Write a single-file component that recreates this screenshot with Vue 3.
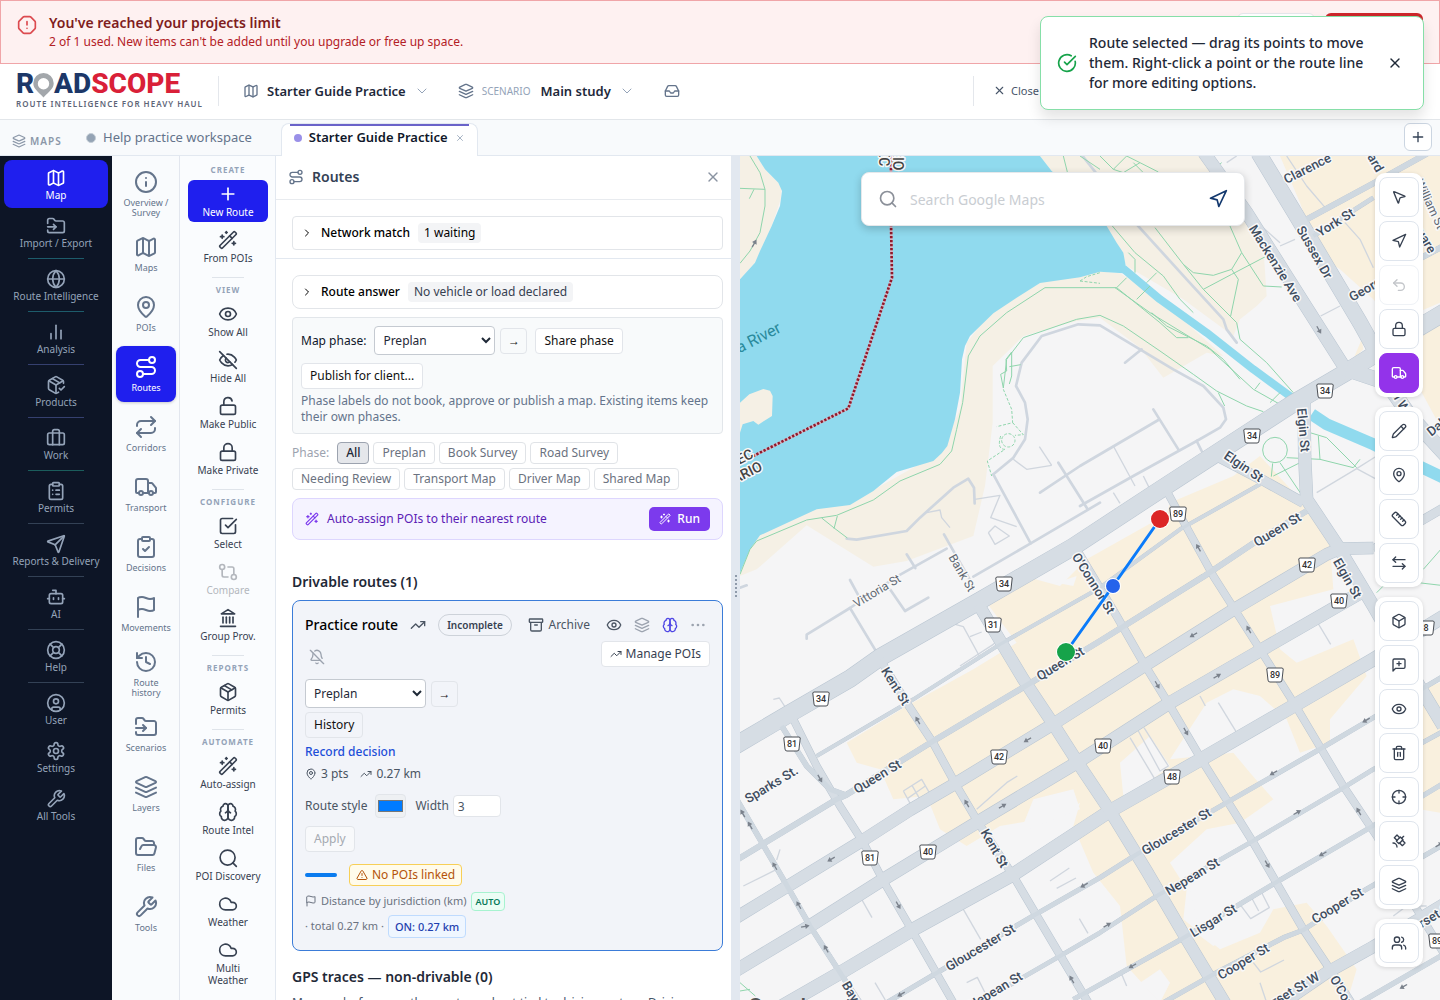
<script setup>
import { h, ref } from 'vue'

const icons = {
  map: '<path d="M14.106 5.553a2 2 0 0 0 1.788 0l3.659-1.83A1 1 0 0 1 21 4.619v12.764a1 1 0 0 1-.553.894l-4.553 2.277a2 2 0 0 1-1.788 0l-4.212-2.106a2 2 0 0 0-1.788 0l-3.659 1.83A1 1 0 0 1 3 19.381V6.618a1 1 0 0 1 .553-.894l4.553-2.277a2 2 0 0 1 1.788 0z"/><path d="M15 5.764v15"/><path d="M9 3.236v15"/>',
  folderInput: '<path d="M2 9V5a2 2 0 0 1 2-2h3.9a2 2 0 0 1 1.69.9l.81 1.2a2 2 0 0 0 1.67.9H20a2 2 0 0 1 2 2v10a2 2 0 0 1-2 2H4a2 2 0 0 1-2-2v-1"/><path d="M2 13h10"/><path d="m9 16 3-3-3-3"/>',
  globe: '<circle cx="12" cy="12" r="10"/><path d="M12 2a14.5 14.5 0 0 0 0 20 14.5 14.5 0 0 0 0-20"/><path d="M2 12h20"/>',
  chart: '<path d="M18 20V10"/><path d="M12 20V4"/><path d="M6 20v-6"/>',
  packageCheck: '<path d="m16 16 2 2 4-4"/><path d="M21 10V8a2 2 0 0 0-1-1.730l-7-4a2 2 0 0 0-2 0l-7 4A2 2 0 0 0 3 8v8a2 2 0 0 0 1 1.730l7 4a2 2 0 0 0 2 0l2-1.140"/><path d="m7.5 4.270 9 5.150"/><path d="M3.290 7 12 12l8.710-5"/><path d="M12 22V12"/>',
  luggage: '<path d="M16 20V4a2 2 0 0 0-2-2h-4a2 2 0 0 0-2 2v16"/><rect width="20" height="14" x="2" y="6" rx="2"/>',
  clipboardList: '<rect width="8" height="4" x="8" y="2" rx="1"/><path d="M16 4h2a2 2 0 0 1 2 2v14a2 2 0 0 1-2 2H6a2 2 0 0 1-2-2V6a2 2 0 0 1 2-2h2"/><path d="M12 11h4"/><path d="M12 16h4"/><path d="M8 11h.01"/><path d="M8 16h.01"/>',
  clipboardCheck: '<rect width="8" height="4" x="8" y="2" rx="1"/><path d="M16 4h2a2 2 0 0 1 2 2v14a2 2 0 0 1-2 2H6a2 2 0 0 1-2-2V6a2 2 0 0 1 2-2h2"/><path d="m9 14 2 2 4-4"/>',
  send: '<path d="M14.536 21.686a.5.5 0 0 0 .937-.024l6.500-19a.496.496 0 0 0-.635-.635l-19 6.500a.5.5 0 0 0-.024.937l7.930 3.180a2 2 0 0 1 1.112 1.110z"/><path d="m21.854 2.147-10.940 10.939"/>',
  bot: '<path d="M12 8V4H8"/><rect width="16" height="12" x="4" y="8" rx="2"/><path d="M2 14h2"/><path d="M20 14h2"/><path d="M15 13v2"/><path d="M9 13v2"/>',
  lifebuoy: '<circle cx="12" cy="12" r="10"/><path d="m4.930 4.930 4.240 4.240"/><path d="m14.830 9.170 4.240-4.240"/><path d="m14.830 14.830 4.240 4.240"/><path d="m9.170 14.830-4.240 4.240"/><circle cx="12" cy="12" r="4"/>',
  user: '<circle cx="12" cy="12" r="10"/><circle cx="12" cy="10" r="3"/><path d="M7 20.662V19a2 2 0 0 1 2-2h6a2 2 0 0 1 2 2v1.662"/>',
  settings: '<path d="M12.220 2h-.440a2 2 0 0 0-2 2v.180a2 2 0 0 1-1 1.730l-.430.250a2 2 0 0 1-2 0l-.150-.080a2 2 0 0 0-2.730.730l-.220.380a2 2 0 0 0 .730 2.730l.150.100a2 2 0 0 1 1 1.720v.510a2 2 0 0 1-1 1.740l-.150.090a2 2 0 0 0-.730 2.730l.220.380a2 2 0 0 0 2.730.730l.150-.080a2 2 0 0 1 2 0l.430.250a2 2 0 0 1 1 1.730V20a2 2 0 0 0 2 2h.440a2 2 0 0 0 2-2v-.180a2 2 0 0 1 1-1.730l.430-.250a2 2 0 0 1 2 0l.150.080a2 2 0 0 0 2.730-.730l.220-.390a2 2 0 0 0-.730-2.730l-.150-.080a2 2 0 0 1-1-1.740v-.500a2 2 0 0 1 1-1.740l.150-.090a2 2 0 0 0 .730-2.730l-.220-.380a2 2 0 0 0-2.730-.730l-.150.080a2 2 0 0 1-2 0l-.430-.250a2 2 0 0 1-1-1.730V4a2 2 0 0 0-2-2z"/><circle cx="12" cy="12" r="3"/>',
  wrench: '<path d="M14.700 6.300a1 1 0 0 0 0 1.400l1.600 1.600a1 1 0 0 0 1.400 0l3.770-3.770a6 6 0 0 1-7.940 7.940l-6.910 6.910a2.120 2.120 0 0 1-3-3l6.910-6.910a6 6 0 0 1 7.940-7.940l-3.760 3.760z"/>',
  info: '<circle cx="12" cy="12" r="10"/><path d="M12 16v-4"/><path d="M12 8h.01"/>',
  pin: '<path d="M20 10c0 4.993-5.539 10.193-7.399 11.799a1 1 0 0 1-1.202 0C9.539 20.193 4 14.993 4 10a8 8 0 0 1 16 0"/><circle cx="12" cy="10" r="3"/>',
  route: '<circle cx="6" cy="19" r="3"/><path d="M9 19h8.500a3.500 3.500 0 0 0 0-7h-11a3.500 3.500 0 0 1 0-7H15"/><circle cx="18" cy="5" r="3"/>',
  repeat: '<path d="m17 2 4 4-4 4"/><path d="M3 11v-1a4 4 0 0 1 4-4h14"/><path d="m7 22-4-4 4-4"/><path d="M21 13v1a4 4 0 0 1-4 4H3"/>',
  truck: '<path d="M14 18V6a2 2 0 0 0-2-2H4a2 2 0 0 0-2 2v11a1 1 0 0 0 1 1h2"/><path d="M15 18H9"/><path d="M19 18h2a1 1 0 0 0 1-1v-3.650a1 1 0 0 0-.220-.624l-3.480-4.350A1 1 0 0 0 17.520 8H14"/><circle cx="17" cy="18" r="2"/><circle cx="7" cy="18" r="2"/>',
  flag: '<path d="M4 15s1-1 4-1 5 2 8 2 4-1 4-1V3s-1 1-4 1-5-2-8-2-4 1-4 1z"/><path d="M4 22v-7"/>',
  history: '<path d="M3 12a9 9 0 1 0 9-9 9.750 9.750 0 0 0-6.740 2.740L3 8"/><path d="M3 3v5h5"/><path d="M12 7v5l4 2"/>',
  layers: '<path d="m12.830 2.180a2 2 0 0 0-1.660 0L2.600 6.080a1 1 0 0 0 0 1.830l8.580 3.910a2 2 0 0 0 1.660 0l8.580-3.900a1 1 0 0 0 0-1.830Z"/><path d="m22 12.650-9.170 4.160a2 2 0 0 1-1.660 0L2 12.650"/><path d="m22 17.650-9.170 4.160a2 2 0 0 1-1.660 0L2 17.650"/>',
  folderOpen: '<path d="m6 14 1.500-2.900A2 2 0 0 1 9.240 10H20a2 2 0 0 1 1.940 2.500l-1.540 6a2 2 0 0 1-1.950 1.500H4a2 2 0 0 1-2-2V5a2 2 0 0 1 2-2h3.900a2 2 0 0 1 1.690.900l.810 1.200a2 2 0 0 0 1.670.900H18a2 2 0 0 1 2 2v2"/>',
  plus: '<path d="M5 12h14"/><path d="M12 5v14"/>',
  wand: '<path d="m21.640 3.640-1.280-1.280a1.210 1.210 0 0 0-1.720 0L2.360 18.640a1.210 1.210 0 0 0 0 1.720l1.280 1.280a1.200 1.200 0 0 0 1.720 0L21.640 5.360a1.200 1.200 0 0 0 0-1.720"/><path d="m14 7 3 3"/><path d="M5 6v4"/><path d="M19 14v4"/><path d="M10 2v2"/><path d="M7 8H3"/><path d="M21 16h-4"/><path d="M11 3H9"/>',
  eye: '<path d="M2.062 12.348a1 1 0 0 1 0-.696 10.750 10.750 0 0 1 19.876 0 1 1 0 0 1 0 .696 10.750 10.750 0 0 1-19.876 0"/><circle cx="12" cy="12" r="3"/>',
  eyeOff: '<path d="M9.880 9.880a3 3 0 1 0 4.240 4.240"/><path d="M10.730 5.080A10.430 10.430 0 0 1 12 5c7 0 10 7 10 7a13.160 13.160 0 0 1-1.670 2.680"/><path d="M6.610 6.610A13.526 13.526 0 0 0 2 12s3 7 10 7a9.740 9.740 0 0 0 5.390-1.610"/><path d="m2 2 20 20"/>',
  unlock: '<rect width="18" height="11" x="3" y="11" rx="2"/><path d="M7 11V7a5 5 0 0 1 9.900-1"/>',
  lock: '<rect width="18" height="11" x="3" y="11" rx="2"/><path d="M7 11V7a5 5 0 0 1 10 0v4"/>',
  squareCheck: '<path d="M21 10.500V19a2 2 0 0 1-2 2H5a2 2 0 0 1-2-2V5a2 2 0 0 1 2-2h12.500"/><path d="m9 11 3 3L22 4"/>',
  compare: '<circle cx="5" cy="6" r="3"/><path d="M12 6h5a2 2 0 0 1 2 2v7"/><circle cx="19" cy="18" r="3"/><path d="M12 18H7a2 2 0 0 1-2-2V9"/>',
  landmark: '<path d="M3 22h18"/><path d="M6 18v-7"/><path d="M10 18v-7"/><path d="M14 18v-7"/><path d="M18 18v-7"/><path d="m12 2 8 5H4z"/>',
  package: '<path d="M11 21.730a2 2 0 0 0 2 0l7-4A2 2 0 0 0 21 16V8a2 2 0 0 0-1-1.730l-7-4a2 2 0 0 0-2 0l-7 4A2 2 0 0 0 3 8v8a2 2 0 0 0 1 1.730z"/><path d="M12 22V12"/><path d="M3.290 7 12 12l8.710-5"/><path d="m7.500 4.270 9 5.150"/>',
  box: '<path d="M21 8a2 2 0 0 0-1-1.730l-7-4a2 2 0 0 0-2 0l-7 4A2 2 0 0 0 3 8v8a2 2 0 0 0 1 1.730l7 4a2 2 0 0 0 2 0l7-4A2 2 0 0 0 21 16Z"/><path d="m3.300 7 8.700 5 8.700-5"/><path d="M12 22V12"/>',
  brain: '<path d="M12 5a3 3 0 1 0-5.997.125 4 4 0 0 0-2.526 5.770 4 4 0 0 0 .556 6.588A4 4 0 1 0 12 18Z"/><path d="M12 5a3 3 0 1 1 5.997.125 4 4 0 0 1 2.526 5.770 4 4 0 0 1-.556 6.588A4 4 0 1 1 12 18Z"/><path d="M15 13a4.500 4.500 0 0 1-3-4 4.500 4.500 0 0 1-3 4"/>',
  search: '<circle cx="11" cy="11" r="8"/><path d="m21 21-4.300-4.300"/>',
  searchWide: '<circle cx="11.500" cy="11.500" r="9"/><path d="m22 22-4.200-4.200"/>',
  cloud: '<path d="M17.500 19H9a7 7 0 1 1 6.710-9h1.790a4.500 4.500 0 1 1 0 9Z"/>',
  x: '<path d="M18 6 6 18"/><path d="m6 6 12 12"/>',
  chevronRight: '<path d="m9 18 6-6-6-6"/>',
  chevronDown: '<path d="m4 8 8 8 8-8"/>',
  inbox: '<path d="M22 12h-6l-2 3h-4l-2-3H2"/><path d="M5.450 5.110 2 12v6a2 2 0 0 0 2 2h16a2 2 0 0 0 2-2v-6l-3.450-6.890A2 2 0 0 0 16.760 4H7.240a2 2 0 0 0-1.790 1.110z"/>',
  alert: '<path d="M15.312 2a2 2 0 0 1 1.414.586l4.688 4.688A2 2 0 0 1 22 8.688v6.624a2 2 0 0 1-.586 1.414l-4.688 4.688a2 2 0 0 1-1.414.586H8.688a2 2 0 0 1-1.414-.586l-4.688-4.688A2 2 0 0 1 2 15.312V8.688a2 2 0 0 1 .586-1.414l4.688-4.688A2 2 0 0 1 8.688 2z"/><path d="M12 8v4"/><path d="M12 16h.01"/>',
  checkCircle: '<path d="M21.801 10A10 10 0 1 1 17 3.335"/><path d="m9 11 3 3L22 4"/>',
  trend: '<path d="m22 7-8.500 8.500-5-5L2 17"/><path d="M16 7h6v6"/>',
  archive: '<rect width="20" height="5" x="2" y="3" rx="1"/><path d="M4 8v11a2 2 0 0 0 2 2h12a2 2 0 0 0 2-2V8"/><path d="M10 12h4"/>',
  dots: '<circle cx="12" cy="12" r="1"/><circle cx="20" cy="12" r="1"/><circle cx="4" cy="12" r="1"/>',
  bellOff: '<path d="M10.268 21a2 2 0 0 0 3.464 0"/><path d="M17 17H4a1 1 0 0 1-.740-1.673C4.590 13.956 6 12.499 6 8a6 6 0 0 1 .258-1.742"/><path d="m2 2 20 20"/><path d="M8.668 3.010A6 6 0 0 1 18 8c0 2.687.770 4.653 1.707 6.050"/>',
  warning: '<path d="m21.730 18-8-14a2 2 0 0 0-3.480 0l-8 14A2 2 0 0 0 4 21h16a2 2 0 0 0 1.730-3"/><path d="M12 9v4"/><path d="M12 17h.01"/>',
  pointer: '<path d="M4.037 4.688a.495.495 0 0 1 .651-.651l16 6.500a.5.5 0 0 1-.063.947l-6.124 1.580a2 2 0 0 0-1.438 1.435l-1.579 6.126a.5.5 0 0 1-.947.063z"/>',
  navigation: '<path d="m3 11 19-9-9 19-2-8z"/>',
  undo: '<path d="M9 14 4 9l5-5"/><path d="M4 9h10.500a5.500 5.500 0 0 1 0 11H11"/>',
  pencil: '<path d="M21.174 6.812a1 1 0 0 0-3.986-3.987L3.842 16.174a2 2 0 0 0-.5.830l-1.321 4.352a.5.5 0 0 0 .623.622l4.353-1.320a2 2 0 0 0 .830-.497z"/><path d="m15 5 4 4"/>',
  ruler: '<path d="M21.300 15.300a2.400 2.400 0 0 1 0 3.400l-2.600 2.600a2.400 2.400 0 0 1-3.400 0L2.700 8.700a2.410 2.410 0 0 1 0-3.400l2.600-2.600a2.410 2.410 0 0 1 3.400 0Z"/><path d="m14.500 12.500 2-2"/><path d="m11.500 9.500 2-2"/><path d="m8.500 6.500 2-2"/><path d="m17.500 15.500 2-2"/>',
  swap: '<path d="M21 7H3"/><path d="m7 3-4 4 4 4"/><path d="M3 17h18"/><path d="m17 21 4-4-4-4"/>',
  comment: '<path d="M21 15a2 2 0 0 1-2 2H7l-4 4V5a2 2 0 0 1 2-2h14a2 2 0 0 1 2 2z"/><path d="M12 7v6"/><path d="M9 10h6"/>',
  trash: '<path d="M3 6h18"/><path d="M19 6v14a2 2 0 0 1-2 2H7a2 2 0 0 1-2-2V6"/><path d="M8 6V4a2 2 0 0 1 2-2h4a2 2 0 0 1 2 2v2"/><path d="M10 11v6"/><path d="M14 11v6"/>',
  crosshair: '<circle cx="12" cy="12" r="10"/><path d="M22 12h-4"/><path d="M6 12H2"/><path d="M12 6V2"/><path d="M12 22v-4"/>',
  satellite: '<path d="M13 7 9 3 5 7l4 4"/><path d="m17 11 4 4-4 4-4-4"/><path d="m8 12 4 4 6-6-4-4Z"/><path d="m16 8 3-3"/><path d="M9 21a6 6 0 0 0-6-6"/>',
  users: '<path d="M16 21v-2a4 4 0 0 0-4-4H6a4 4 0 0 0-4 4v2"/><circle cx="9" cy="7" r="4"/><path d="M22 21v-2a4 4 0 0 0-3-3.870"/><path d="M16 3.130a4 4 0 0 1 0 7.750"/>'
}

const Icon = (props) =>
  h('svg', {
    width: props.size,
    height: props.size,
    viewBox: '0 0 24 24',
    fill: 'none',
    stroke: 'currentColor',
    'stroke-width': props.weight || 2,
    'stroke-linecap': 'round',
    'stroke-linejoin': 'round',
    'aria-hidden': 'true',
    class: 'icon',
    innerHTML: icons[props.name]
  })
Icon.props = ['name', 'size', 'weight']

const mainNav = [
  { label: 'Map', icon: 'map', active: true },
  { label: 'Import / Export', icon: 'folderInput', tone: 'teal' },
  { label: 'Route Intelligence', icon: 'globe', tone: 'teal' },
  { label: 'Analysis', icon: 'chart', tone: 'indigo' },
  { label: 'Products', icon: 'packageCheck', tone: 'indigo' },
  { label: 'Work', icon: 'luggage', tone: 'green' },
  { label: 'Permits', icon: 'clipboardList', tone: 'slate' },
  { label: 'Reports & Delivery', icon: 'send', tone: 'slate' },
  { label: 'AI', icon: 'bot', tone: 'slate' },
  { label: 'Help', icon: 'lifebuoy', tone: 'slate' },
  { label: 'User', icon: 'user' },
  { label: 'Settings', icon: 'settings' },
  { label: 'All Tools', icon: 'wrench' }
]

const sectionNav = [
  { label: 'Overview / Survey', icon: 'info' },
  { label: 'Maps', icon: 'map' },
  { label: 'POIs', icon: 'pin' },
  { label: 'Routes', icon: 'route', active: true },
  { label: 'Corridors', icon: 'repeat' },
  { label: 'Transport', icon: 'truck' },
  { label: 'Decisions', icon: 'clipboardCheck' },
  { label: 'Movements', icon: 'flag' },
  { label: 'Route history', icon: 'history' },
  { label: 'Scenarios', icon: 'folderInput' },
  { label: 'Layers', icon: 'layers' },
  { label: 'Files', icon: 'folderOpen' },
  { label: 'Tools', icon: 'wrench' }
]

const actionGroups = [
  { title: 'CREATE', items: [{ label: 'New Route', icon: 'plus', primary: true }, { label: 'From POIs', icon: 'wand' }] },
  { title: 'VIEW', items: [{ label: 'Show All', icon: 'eye' }, { label: 'Hide All', icon: 'eyeOff' }, { label: 'Make Public', icon: 'unlock' }, { label: 'Make Private', icon: 'lock' }] },
  { title: 'CONFIGURE', items: [{ label: 'Select', icon: 'squareCheck' }, { label: 'Compare', icon: 'compare', disabled: true }, { label: 'Group Prov.', icon: 'landmark' }] },
  { title: 'REPORTS', items: [{ label: 'Permits', icon: 'package' }] },
  { title: 'AUTOMATE', items: [{ label: 'Auto-assign', icon: 'wand' }, { label: 'Route Intel', icon: 'brain' }, { label: 'POI Discovery', icon: 'searchWide' }, { label: 'Weather', icon: 'cloud' }, { label: 'Multi\nWeather', icon: 'cloud' }] }
]

const phases = ['All', 'Preplan', 'Book Survey', 'Road Survey', 'Needing Review', 'Transport Map', 'Driver Map', 'Shared Map']
const phase = ref('All')
const mapPhase = ref('Preplan')
const routePhase = ref('Preplan')
const routeColor = ref('#007bff')
const routeWidth = ref('3')
const query = ref('')

const toolGroups = [
  [['pointer', 'Select'], ['navigation', 'Navigate'], ['undo', 'Undo', 'off'], ['lock', 'Lock'], ['truck', 'Truck view', 'on']],
  [['pencil', 'Draw'], ['pin', 'Add point'], ['ruler', 'Measure'], ['swap', 'Swap']],
  [['box', '3D'], ['comment', 'Comment'], ['eye', 'Visibility'], ['trash', 'Delete'], ['crosshair', 'Centre'], ['satellite', 'Satellite'], ['layers', 'Layers']],
  [['users', 'People']]
]

// Map geometry is kept in a grid three times finer than the drawn map.
const roads = [
  { w: 54, p: '-20,1772 150,1672 330,1568 420,1504 720,1334 1000,1172 1270,995 1660,742 1820,648 1960,560 2120,465' },
  { w: 18, p: '-20,2118 290,1930 320,1916 580,1755 860,1588 1080,1455 1390,1262 1540,1162 1700,1065' },
  { w: 12, p: '230,1800 520,1630 780,1465 1080,1295 1320,1120 1560,985' },
  { w: 38, p: '-20,2290 370,2052 510,1962 640,1886 940,1704 1220,1525 1490,1355 1760,1195 1800,1178 1900,1176' },
  { w: 40, p: '-20,2448 210,2310 430,2170 710,2000 1010,1820 1290,1640 1560,1484 1880,1300' },
  { w: 42, p: '40,2600 310,2445 520,2320 820,2155 1110,1965 1390,1806 1660,1650 1900,1510 2120,1376' },
  { w: 15, p: '440,2540 600,2445 870,2285 1080,2165 1190,2095 1460,1940 1730,1785 1900,1685 2120,1555' },
  { w: 14, p: '700,2550 960,2400 1080,2330 1250,2220 1530,2060 1810,1895 1900,1840 2120,1720' },
  { w: 15, p: '1000,2530 1320,2352 1610,2178 1890,2015 2120,1876' },
  { w: 15, p: '1270,2540 1420,2455 1630,2345 1690,2322 1870,2205 2120,2060' },
  { w: 38, p: '1600,2560 1760,2450 1900,2372 2120,2240' },
  { w: 16, p: '1860,2540 2120,2390' },
  { w: 17, p: '-10,1930 130,2170 210,2310 310,2465 360,2540' },
  { w: 24, p: '160,1690 230,1830 300,1950 370,2060 430,2175 520,2330 640,2540' },
  { w: 17, p: '125,1710 200,1830 270,1900 320,1918' },
  { w: 25, p: '420,1510 500,1640 580,1762 650,1890 715,2000 820,2160 950,2380 1045,2540' },
  { w: 38, p: '715,1345 850,1570 940,1705 1020,1830 1110,1965 1220,2145 1340,2350 1460,2550' },
  { w: 25, p: '1010,1180 1130,1380 1210,1520 1290,1650 1390,1820 1540,2060 1690,2320 1770,2440 1840,2550' },
  { w: 24, p: '1280,1005 1420,1260 1560,1480 1670,1655 1810,1890 1910,2040 2000,2210 2110,2390' },
  { w: 40, p: '1692,740 1694,900 1700,1030 1790,1165 1900,1350 2020,1560 2110,1710' },
  { w: 32, p: '1440,905 1560,968 1690,1040' },
  { w: 40, p: '1392,-10 1520,170 1640,360 1830,660' },
  { w: 48, p: '1555,-10 1670,180 1860,500 1910,590' },
  { w: 18, p: '1700,190 1900,82 2120,-40' },
  { w: 14, p: '1720,240 1900,125' },
  { w: 18, p: '1830,430 1940,360 2120,265' },
  { w: 46, p: '1820,640 1940,680 2010,780 2120,900' },
  { w: 28, p: '1900,1180 2000,1120 2120,1050' }
]

const lanes = [
  '320,1148 350,1151 500,1125 540,1085 640,995 685,968 702,995 704,1042',
  '1020,-10 1190,205 1340,370 1450,490 1460,520 1490,560',
  '760,955 820,905 855,850 863,790 855,740 828,690 845,620 905,540 1015,505 1080,508 1200,580 1300,640 1390,690 1450,755 1458,790 1440,815 1370,855 1180,960 1020,1050',
  '900,1010 1020,930 1255,792', '1240,760 1315,880', '1370,855 1385,885', '760,955 872,1162', '955,920 1042,1058',
  '700,1262 872,1162 1080,1040', '200,1448 200,1436 330,1356 470,1262 620,1178', '330,1356 412,1492', '450,1300 495,1365 565,1325',
  '500,1195 526,1236', '612,1135 700,1290', '1205,580 1155,620', '330,1272 355,1318', '0,1295 20,1288'
]

const alleys = [
  '820,910 860,940 935,928', '898,872 935,928', '560,1070 600,1062 605,1085 630,1115', '704,1030 780,1018 752,1085 830,1112',
  '745,1130 765,1110 808,1140 765,1165 745,1130', '660,1530 760,1465 780,1440', '635,1402 670,1412 718,1500', '690,1442 725,1428',
  '490,1905 545,1870 568,1910 512,1945 490,1905', '516,1888 540,1930', '502,1928 556,1890', '710,1960 800,1880 832,1860',
  '1170,1745 1245,1870', '1195,1725 1260,1845 1285,1830 1212,1715', '1435,1640 1490,1730', '1380,1620 1396,1650', '1730,1395 1772,1465',
  '365,2230 396,2285', '670,2260 722,2350', '930,2175 988,2136', '950,2197 1008,2166', '1018,2288 1044,2332', '680,2480 712,2464 740,2520',
  '405,2480 436,2532', '100,1630 118,1626 140,1660', '10,2190 110,2140', '110,2112 120,2080', '1500,2245 1532,2288 1588,2255 1564,2208', '1532,2220 1556,2265',
  '1145,2455 1160,2490', '1540,2420 1562,2448 1632,2412', '1560,2480 1580,2540', '1120,870 1185,990', '1730,1010 1850,938 1910,900', '1850,938 1910,970',
  '1120,1010 1140,1042', '1210,960 1230,1000', '1620,270 1665,250', '1742,480 1800,450', '1815,200 1860,250 1900,335', '1460,20 1490,0', '1530,180 1620,260',
  '1640,0 1700,90 1760,160', '1960,2280 2000,2250 2060,2250', '1910,2320 1950,2290'
]

const trails = [
  '30,0 60,50 75,100 75,150 60,230 30,285 0,322', '0,97 75,100', '42,100 28,128',
  '0,1255 30,1180 50,1155 200,1092 290,1078 400,1032 480,975 600,925 635,885 650,820 668,740 685,600 720,540 800,470 915,395 1130,395 1260,500 1310,545 1345,545',
  '245,1086 285,1118 322,1146', '292,1080 282,1118', '790,696 800,610 850,545 1010,490 1080,478 1150,510 1260,585 1360,655 1430,705 1520,750 1570,767',
  '790,696 782,655 800,645 798,610 815,588 815,660 808,684', '808,632 842,626', '1100,190 1185,290 1270,360 1320,430 1360,470',
  '1125,395 1230,470 1410,580 1540,700 1620,745', '1235,470 1280,510 1400,570 1450,610 1500,670', '1245,215 1330,325 1360,350 1420,358 1475,340 1505,290 1470,210',
  '1505,290 1570,390 1625,393', '1390,400 1475,355 1580,300', '1330,325 1390,400 1490,500 1500,550 1580,620 1660,710', '1475,340 1495,370 1472,480',
  '1080,0 1120,40 1160,0 1200,20', '970,0 982,48', '1120,40 1150,50 1200,20 1255,48', '1180,20 1210,50', '1400,60 1445,20', '1020,0 1080,40', '1165,290 1185,310 1185,350',
  '1190,430 1230,390', '1220,380 1250,350', '1130,395 1160,365', '1640,905 1740,910 1840,935 1860,910', '1598,922 1594,962', '1600,960 1680,920', '1620,920 1682,1012',
  '1735,840 1740,910', '1710,830 1760,845 1850,935', '1435,710 1454,750', '1545,700 1560,680', '1590,740 1620,710', '0,2480 46,2520', '0,2505 30,2500', '1910,1310 1950,1270 2120,1290', '2050,1240 2120,1160'
]

const blocks = [
  '740,1340 870,1265 960,1290 1040,1210 1280,1075 1290,1040 1480,960 1560,900 1690,1040 1770,1170 1780,1300 1590,1350 1620,1480 1670,1520 1840,1450 1880,1560 1770,1690 1770,1760 1680,1790 1640,1690 1560,1620 1480,1600 1400,1640 1290,1810 1480,1790 1530,1850 1600,1930 1500,2000 1400,2020 1290,2120 1340,2200 1330,2290 1440,2380 1560,2330 1600,2260 1700,2240 1760,2310 1850,2440 1820,2540 1260,2540 1160,2430 1140,2250 1060,2150 1000,2010 1020,1940 960,1980 780,2010 680,2070 600,2020 560,1920 460,1930 420,1840 350,1820 320,1760 500,1650 700,1540 830,1460',
  '1620,0 2100,0 2100,440 1960,500 1900,430 1800,340 1740,300 1680,140', '2050,520 2100,490 2100,810 2040,700', '1840,610 1870,580 1865,550', '2040,1600 2100,1580 2100,1970 2040,1960'
]
const gaps = [
  '1140,1820 1230,1740 1290,1830 1210,1890 1150,1920', '880,1930 1000,1900 1020,1960 840,2030', '950,1280 1010,1260 1000,1290', '1340,2160 1440,2100 1480,2220 1480,2340 1420,2370 1380,2340', '1200,2480 1260,2440 1290,2480 1260,2540'
]

const labels = [
  [567, 12, -27, 'Clarence'], [595, 66, -32, 'York St'], [575, 96, 60, 'Sussex Dr'], [536, 107, 58, 'Mackenzie Ave'], [628, 131, -30, 'George'],
  [564, 274, 85, 'Elgin St'], [504, 310, 34, 'Elgin St'], [537, 373, -31, 'Queen St'], [608, 422, 60, 'Elgin St'], [354, 427, 58, 'O\'Connor St'],
  [320, 507, -31, 'Queen St'], [156, 530, 58, 'Kent St'], [137, 620, -31, 'Queen St'], [31, 628, -31, 'Sparks St.'], [255, 692, 60, 'Kent St'],
  [436, 675, -31, 'Gloucester St'], [452, 720, -31, 'Nepean St'], [473, 764, -31, 'Lisgar St'], [597, 749, -31, 'Cooper St'], [503, 805, -31, 'Cooper St'],
  [240, 791, -31, 'Gloucester St'], [255, 834, -31, 'Nepean St'], [115, 842, 60, 'Bay St'], [541, 841, -31, 'Somerset St W'], [611, 850, 60, 'O\'Connor St'],
  [630, -4, 60, 'Edward'], [683, 78, 60, 'Square'], [698, 269, -38, 'Daly'], [694, 759, -31, 'merset St W'], [657, 238, 60, 'Wall W']
]
const quietLabels = [[137, 435, -31, 'Vittoria St'], [222, 417, 60, 'Bank St'], [690, 48, 65, 'William St']]

const shields = [
  [585, 235, '34'], [512, 280, '34'], [438, 358, '89'], [567, 409, '42'], [599, 445, '40'], [264, 428, '34'], [253, 469, '31'], [535, 519, '89'],
  [81, 543, '34'], [52, 588, '81'], [259, 601, '42'], [363, 590, '40'], [432, 621, '48'], [188, 696, '40'], [130, 702, '81'], [686, 472, '8'], [697, 785, '89']
]

const arrows = [
  [533, 1693, -120], [862, 1752, 150], [240, 1868, 60], [680, 1942, -120], [788, 1950, -30], [8, 1972, -120], [30, 2008, -120], [104, 2130, -120],
  [176, 2247, -120], [273, 2110, 150], [475, 2248, 60], [196, 2311, -10], [258, 2378, -120], [1032, 2188, 150], [995, 2470, -120], [483, 2515, 150],
  [1360, 1437, 150], [1526, 1420, -120], [1432, 1560, -30], [1252, 1587, 60], [1338, 1727, 60], [1878, 1693, 150], [1600, 1851, 150], [1672, 1969, -30],
  [1856, 1966, -120], [1582, 2125, 60], [1748, 2094, 150], [1102, 2307, -30], [1177, 2430, 150], [1990, 2492, 150], [1737, 522, 60],
  [1375, 1175, -120], [43, 262, -60], [2098, 2066, -30]
]
</script>

<template>
  <div class="app">
    <section class="banner">
      <Icon name="alert" :size="20" class="banner-icon" />
      <div class="banner-text">
        <strong>You've reached your projects limit</strong>
        <span>2 of 1 used. New items can't be added until you upgrade or free up space.</span>
      </div>
      <div class="banner-actions">
        <button class="banner-manage" aria-label="Manage"></button>
        <button class="banner-upgrade" aria-label="Upgrade"></button>
      </div>
    </section>

    <header class="topbar">
      <a href="#" class="brand">
        <span class="wordmark">
          <span class="navy">R</span>
          <svg class="brand-pin" width="21" height="25" viewBox="0 0 21 25" aria-hidden="true">
            <path fill="#a3a7ab" fill-rule="evenodd" d="M10.500 0a10.200 10.200 0 0 1 10.200 10.200c0 5.500-4.500 8-10.200 14.300C4.800 18.200.3 15.700.3 10.200A10.200 10.200 0 0 1 10.500 0Zm0 5a5.700 5.700 0 1 0 0 11.400 5.700 5.700 0 0 0 0-11.400Z" />
          </svg>
          <span class="navy">AD</span><span class="red">SCOPE</span>
        </span>
        <span class="tagline">ROUTE INTELLIGENCE FOR HEAVY HAUL</span>
      </a>
      <i class="rule"></i>
      <button class="picker project"><Icon name="map" :size="16" /><b>Starter Guide Practice</b><Icon name="chevronDown" :size="12" class="muted" /></button>
      <button class="picker scenario"><Icon name="layers" :size="16" /><small>SCENARIO</small><b>Main study</b><Icon name="chevronDown" :size="12" class="muted" /></button>
      <button class="picker" aria-label="Inbox"><Icon name="inbox" :size="16" /></button>
      <i class="rule last"></i>
      <button class="close-project"><Icon name="x" :size="13" />Close</button>
    </header>

    <nav class="tabs" aria-label="Open maps">
      <span class="tabs-title"><Icon name="layers" :size="14" />MAPS</span>
      <a href="#" class="tab"><i class="dot"></i>Help practice workspace</a>
      <a href="#" class="tab current"><i class="dot"></i>Starter Guide Practice<Icon name="x" :size="10" class="tab-close" /></a>
      <button class="add-tab" aria-label="New tab"><Icon name="plus" :size="16" /></button>
    </nav>

    <main class="workspace">
      <nav class="main-nav" aria-label="Main">
        <template v-for="item in mainNav" :key="item.label">
          <a href="#" :class="{ active: item.active }"><Icon :name="item.icon" :size="20" /><span>{{ item.label }}</span></a>
          <hr v-if="item.tone" :class="item.tone" />
        </template>
      </nav>

      <nav class="section-nav" aria-label="Section">
        <a v-for="item in sectionNav" :key="item.label" href="#" :class="{ active: item.active }">
          <Icon :name="item.icon" :size="24" /><span>{{ item.label }}</span>
        </a>
      </nav>

      <aside class="actions">
        <section v-for="group in actionGroups" :key="group.title">
          <h3>{{ group.title }}</h3>
          <button v-for="item in group.items" :key="item.label" :class="{ primary: item.primary }" :disabled="item.disabled">
            <Icon :name="item.icon" :size="20" /><span>{{ item.label }}</span>
          </button>
        </section>
      </aside>

      <section class="panel">
        <header class="panel-head">
          <Icon name="route" :size="16" />
          <h2>Routes</h2>
          <button class="plain" aria-label="Close panel"><Icon name="x" :size="16" /></button>
        </header>
        <div class="panel-top">
          <button class="disclosure"><Icon name="chevronRight" :size="12" /><b>Network match</b><span>1 waiting</span></button>
        </div>
        <div class="panel-body">
          <button class="disclosure round"><Icon name="chevronRight" :size="12" /><b>Route answer</b><span class="soft">No vehicle or load declared</span></button>

          <div class="phase-box">
            <div class="phase-row">
              <label for="map-phase">Map phase:</label>
              <span class="pair">
                <select id="map-phase" v-model="mapPhase"><option>Preplan</option><option>Road Survey</option></select>
                <button class="btn arrow faint" aria-label="Next phase">→</button>
              </span>
              <button class="btn">Share phase</button>
              <button class="btn">Publish for client...</button>
            </div>
            <p>Phase labels do not book, approve or publish a map. Existing items keep their own phases.</p>
          </div>

          <div class="chips">
            <span>Phase:</span>
            <button v-for="name in phases" :key="name" :class="{ on: phase === name }" @click="phase = name">{{ name }}</button>
          </div>

          <div class="assign">
            <Icon name="wand" :size="14" /><span>Auto-assign POIs to their nearest route</span>
            <button><Icon name="wand" :size="12" />Run</button>
          </div>

          <h3 class="list-title">Drivable routes (1)</h3>
          <article class="route">
            <div class="route-head">
              <strong>Practice route</strong>
              <Icon name="trend" :size="16" />
              <span class="badge">Incomplete</span>
              <button class="plain archive"><Icon name="archive" :size="16" />Archive</button>
              <button class="plain tool" aria-label="Show"><Icon name="eye" :size="16" /></button>
              <button class="plain tool pale" aria-label="Layers"><Icon name="layers" :size="16" /></button>
              <button class="plain tool violet" aria-label="Route intel"><Icon name="brain" :size="16" /></button>
              <button class="plain tool pale" aria-label="More"><Icon name="dots" :size="16" /></button>
            </div>
            <div class="route-sub">
              <button class="plain bell" aria-label="Alerts off"><Icon name="bellOff" :size="16" /></button>
              <button class="btn manage"><Icon name="trend" :size="12" />Manage POIs</button>
            </div>
            <div class="pair">
              <select v-model="routePhase" aria-label="Route phase"><option>Preplan</option><option>Road Survey</option></select>
              <button class="btn arrow faint" aria-label="Next route phase">→</button>
            </div>
            <button class="btn faint history">History</button>
            <a href="#" class="decision">Record decision</a>
            <div class="stats">
              <span><Icon name="pin" :size="12" />3 pts</span>
              <span><Icon name="trend" :size="12" />0.27 km</span>
            </div>
            <div class="style-row">
              <label for="route-color">Route style</label>
              <input id="route-color" v-model="routeColor" type="color" />
              <label for="route-width">Width</label>
              <input id="route-width" v-model="routeWidth" type="text" inputmode="numeric" />
            </div>
            <button class="btn apply" disabled>Apply</button>
            <div class="linked"><i></i><span><Icon name="warning" :size="12" />No POIs linked</span></div>
            <div class="distance"><Icon name="flag" :size="12" />Distance by jurisdiction (km)<em>AUTO</em></div>
            <div class="total">· total 0.27 km ·<em>ON: 0.27 km</em></div>
          </article>

          <h3 class="list-title traces">GPS traces — non-drivable (0)</h3>
          <p class="traces-note">Map marks from another route are kept tied to driving system. Driving</p>
        </div>
      </section>

      <div class="splitter"><i></i></div>

      <section class="map">
        <svg class="canvas" viewBox="0 0 700 844" preserveAspectRatio="xMinYMin slice" role="img" aria-label="Street map">
          <rect width="700" height="844" fill="#f5f5f6" />
          <g transform="scale(.333333)" fill="none" stroke-linejoin="round">
            <g fill="#f5f0e5">
              <path d="M0 0H50L75 40 125 90 122 130 95 210 45 320 0 370Z" />
              <path d="M0 1260 50 1240 200 1108 300 1170 400 1232 500 1215 700 1140 735 990 758 800 758 630 820 570 850 540 1010 495 1080 485 1200 575 1270 665 1400 590 1450 600 1250 420 1140 352 1000 340 880 380 750 470 680 560 660 760 600 890 350 1030 200 1060 50 1130 0 1230Z" />
              <path d="M900 0H1380L1570 270 1580 420 1550 450 1500 490 1480 540 1330 430 1160 330 1100 210 935 45Z" />
            </g>
            <path fill="#90daee" d="M50 0H900L935 45 1040 130 1100 210 1130 260 1150 290 1160 345 1150 352 1080 347 1020 364 900 381 830 425 760 472 690 540 675 570 666 610 660 710 645 790 622 870 605 892 580 915 470 948 400 1005 330 1047 230 1060 60 1138 30 1180 0 1250V370L45 320 60 285 95 210 120 150 126 105 115 80 75 40Z" />
            <path fill="#f5f0e5" d="M0 740 28 715 70 699 90 704 98 720 96 780 55 806 40 795 8 805 0 830Z" />
            <g fill="#f9f0de"><polygon v-for="p in blocks" :key="p" :points="p" /></g>
            <g fill="#f5f5f6"><polygon v-for="p in gaps" :key="p" :points="p" /></g>
            <g stroke="#d0d6de" stroke-width="4"><polyline v-for="p in alleys" :key="p" :points="p" /></g>
            <g stroke="#cfd6df" stroke-width="8" stroke-linecap="round"><polyline v-for="p in lanes" :key="p" :points="p" /></g>
            <path stroke="#90daee" stroke-width="24" d="M1150 338 1260 430 1400 530 1540 640 1670 735" />
            <path stroke="#90daee" stroke-width="36" d="M1715 775 1760 805 1900 865 2120 970" />
            <g stroke="#8fd5ac" stroke-width="3"><polyline v-for="p in trails" :key="p" :points="p" /><ellipse cx="1605" cy="882" rx="37" ry="38" /></g>
            <path stroke="#8fd5ac" stroke-width="3" stroke-dasharray="9 5" d="M790 700 815 760 818 800 770 812 M818 800 850 836 825 838 M782 840 Q770 880 795 880 L742 915 755 960 M785 853a20 20 0 1 0 40 0 20 20 0 1 0-40 0 M1020 375 1040 362 1080 350 M1020 375 1080 382" />
            <g stroke="#b9c5d1"><polyline v-for="r in roads" :key="r.p" :points="r.p" :stroke-width="r.w" /></g>
            <g stroke="#d6dde4"><polyline v-for="r in roads" :key="r.p" :points="r.p" :stroke-width="r.w - 3" /></g>
            <g stroke="#cfd8e0"><polyline v-for="r in roads.filter((r) => r.w < 20)" :key="r.p" :points="r.p" :stroke-width="r.w - 2" /></g>
            <g v-for="(a, i) in arrows" :key="i" :transform="`translate(${a[0]} ${a[1]}) rotate(${a[2]})`" fill="#7b828c">
              <path d="M-13 -2H0V-8L13 0 0 8V2H-13Z" />
            </g>
            <path stroke="#d8b4c2" stroke-width="8" d="M453 0V200L456 365 325 757 20 910" />
            <path stroke="#8f1a2b" stroke-width="8" stroke-dasharray="7 5" d="M453 0V200L456 365 325 757 20 910" />
          </g>

          <g class="street">
            <text v-for="(t, i) in labels" :key="i" :transform="`translate(${t[0]} ${t[1]}) rotate(${t[2]})`" y="5">{{ t[3] }}</text>
          </g>
          <g class="street quiet">
            <text v-for="(t, i) in quietLabels" :key="i" :transform="`translate(${t[0]} ${t[1]}) rotate(${t[2]})`" y="4">{{ t[3] }}</text>
          </g>
          <g class="street border-label">
            <text transform="translate(139 -16) rotate(90)">QUEBEC</text>
            <text transform="translate(153 -15) rotate(90)">ONTARIO</text>
            <text transform="translate(-9 313) rotate(-27)">QUEBEC</text>
            <text transform="translate(-3 327) rotate(-27)">ONTARIO</text>
          </g>
          <text class="river" transform="translate(2 196) rotate(-27)">Ottawa River</text>
          <text class="watermark" x="8" y="858">Google</text>

          <g v-for="(s, i) in shields" :key="i" :transform="`translate(${s[0]} ${s[1]})`" class="shield">
            <path d="M-7 -7H7Q9 -7 8 -4L7 5Q7 7 5 7H-5Q-7 7 -7 5L-8 -4Q-9 -7 -7 -7Z" />
            <text y="3">{{ s[2] }}</text>
          </g>

          <path d="M420 363 373 430 326 496" fill="none" stroke="#0a7bfa" stroke-width="3" />
          <circle cx="420" cy="363" r="10" fill="#fff" /><circle cx="420" cy="363" r="9" fill="#dc2626" />
          <circle cx="373" cy="430" r="8" fill="#fff" /><circle cx="373" cy="430" r="7" fill="#2563eb" />
          <circle cx="326" cy="496" r="10" fill="#fff" /><circle cx="326" cy="496" r="9" fill="#16a34a" />
        </svg>

        <form class="search" @submit.prevent>
          <Icon name="search" :size="20" />
          <input v-model="query" type="search" aria-label="Search Google Maps" placeholder="Search Google Maps" />
          <button class="plain" aria-label="My location"><Icon name="navigation" :size="20" /></button>
        </form>

        <div class="toolbars">
          <div v-for="(group, g) in toolGroups" :key="g" class="toolbar">
            <button v-for="t in group" :key="t[1]" :class="t[2]" :aria-label="t[1]" :disabled="t[2] === 'off'"><Icon :name="t[0]" :size="16" /></button>
          </div>
        </div>
      </section>
    </main>

    <div class="toast" role="status">
      <Icon name="checkCircle" :size="20" />
      <p>Route selected — drag its points to move them. Right-click a point or the route line for more editing options.</p>
      <button class="plain" aria-label="Dismiss"><Icon name="x" :size="16" /></button>
    </div>
  </div>
</template>

<style>
body {
  margin: 0;
  overflow: hidden;
}
.icon {
  display: block;
  flex: none;
}
</style>

<style scoped>
* {
  box-sizing: border-box;
}
.app {
  display: flex;
  flex-direction: column;
  height: 100vh;
  font-family: "Noto Sans", sans-serif;
  font-size: 12px;
  line-height: 16px;
  color: #0f172a;
  background: #fff;
}
h2, h3, p {
  margin: 0;
}
button, input, select {
  font: inherit;
  color: inherit;
  margin: 0;
}
button {
  cursor: pointer;
}
a {
  color: inherit;
  text-decoration: none;
}
.plain {
  display: flex;
  padding: 0;
  border: 0;
  background: none;
}

.banner {
  display: flex;
  flex: none;
  height: 64px;
  padding: 12px 16px;
  gap: 12px;
  background: #fef1f1;
  border: 1px solid #f0a5a8;
}
.banner-icon {
  margin-top: 2px;
  color: #dc4a4f;
}
.banner-text {
  display: flex;
  flex-direction: column;
  flex: 1;
  gap: 1px;
  color: #b32025;
}
.banner-text strong {
  font-size: 14px;
  line-height: 20px;
  font-weight: 600;
  color: #7f1d1d;
}
.banner-actions {
  display: flex;
  gap: 10px;
}
.banner-actions button {
  height: 32px;
  border-radius: 6px;
}
.banner-manage {
  width: 78px;
  border: 1px solid #e5e7eb;
  background: #fff;
}
.banner-upgrade {
  width: 98px;
  border: 0;
  background: #cc262b;
}

.topbar {
  display: flex;
  flex: none;
  align-items: center;
  height: 56px;
  padding: 0 16px 2px;
  border-bottom: 1px solid #e2e6ea;
}
.brand {
  display: flex;
  flex-direction: column;
  width: 202px;
  height: 40px;
}
.wordmark {
  display: flex;
  height: 28px;
  line-height: 26px;
  font-family: Roboto, sans-serif;
  font-size: 28px;
  font-weight: 800;
}
.brand-pin {
  margin: 2px 0 0 -1px;
}
.navy {
  color: #1c3768;
}
.red {
  color: #d92038;
}
.tagline {
  font-size: 8px;
  line-height: 10px;
  font-weight: 600;
  letter-spacing: 1px;
  white-space: nowrap;
  color: #5d6577;
}
.rule {
  width: 1px;
  height: 30px;
  background: #e4e7ec;
}
.rule.last {
  margin-left: auto;
}
.picker {
  display: flex;
  align-items: center;
  gap: 8px;
  padding: 0;
  border: 0;
  background: none;
  color: #64748b;
}
.picker b {
  font-size: 13px;
  font-weight: 600;
  color: #1e293b;
}
.picker small {
  margin-right: 2px;
  font-size: 10px;
  color: #94a3b8;
}
.picker b + svg {
  margin-left: 2px;
}
.muted {
  color: #94a3b8;
}
.project {
  margin: 0 30px 0 24px;
}
.scenario {
  margin-right: 31px;
}
.close-project {
  display: flex;
  align-items: center;
  gap: 5px;
  width: 450px;
  padding: 0 0 0 19px;
  border: 0;
  background: none;
  font-size: 11px;
  color: #475569;
}

.tabs {
  display: flex;
  flex: none;
  height: 36px;
  padding: 0 8px 0 12px;
  background: #f8fafc;
  border-bottom: 1px solid #e2e8f0;
}
.tabs-title {
  display: flex;
  align-items: center;
  gap: 4px;
  width: 74px;
  padding-top: 7px;
  font-size: 10px;
  font-weight: 600;
  letter-spacing: 1px;
  color: #8b97a8;
}
.tab {
  display: flex;
  align-items: center;
  gap: 7px;
  padding-bottom: 1px;
  font-size: 13px;
  color: #64748b;
}
.tab .dot {
  width: 10px;
  height: 10px;
  margin-top: 2px;
  border-radius: 50%;
  background: #94a3b4;
  border: 1px solid #c4cdd6;
}
.tab.current {
  height: 33px;
  margin: 3px 0 0 29px;
  padding: 0 12px 6px;
  border: 1px solid #e2e8f0;
  border-bottom: 0;
  border-radius: 8px 8px 0 0;
  background: linear-gradient(#6a63c9, #6a63c9) center top / calc(100% - 16px) 2px no-repeat #fff;
  font-weight: 600;
  color: #0f172a;
}
.tab.current .dot {
  width: 8px;
  height: 8px;
  border: 0;
  background: #9a90e8;
}
.tab-close {
  margin-top: 2px;
  color: #94a3b8;
}
.add-tab {
  display: grid;
  place-items: center;
  width: 28px;
  height: 28px;
  margin: 3px 0 0 auto;
  padding: 0;
  border: 1px solid #cbd5e1;
  border-radius: 6px;
  background: #fff;
  color: #334155;
}

.workspace {
  display: flex;
  flex: 1;
  min-height: 0;
}
.main-nav {
  flex: none;
  width: 112px;
  padding: 4px;
  background: #0d1526;
  color: #94a3b8;
}
.main-nav a {
  display: flex;
  flex-direction: column;
  align-items: center;
  height: 48px;
  padding-top: 8px;
  border-radius: 8px;
}
.main-nav span {
  margin-top: 1px;
  font-size: 10px;
  line-height: 12px;
  white-space: nowrap;
}
.main-nav .active {
  background: #1f1fee;
  color: #fff;
}
.main-nav hr {
  width: 56px;
  height: 1px;
  margin: 2px auto;
  border: 0;
  background: #334155;
}
.main-nav hr.teal {
  background: #1d5c6b;
}
.main-nav hr.indigo {
  background: #35406f;
}
.main-nav hr.green {
  background: #1b5d5c;
}

.section-nav {
  display: flex;
  flex: none;
  flex-direction: column;
  gap: 4px;
  width: 68px;
  padding: 10px 3px 0 4px;
  border-right: 1px solid #e2e6ee;
  background: #f9fbfd;
  color: #64748b;
}
.section-nav a {
  display: flex;
  flex: none;
  flex-direction: column;
  align-items: center;
  justify-content: center;
  gap: 4px;
  height: 56px;
  padding: 0 4px;
  border-radius: 8px;
}
.section-nav span {
  max-width: 52px;
  font-size: 9px;
  line-height: 10px;
  text-align: center;
}
.section-nav .active {
  background: #1f1fee;
  box-shadow: 0 1px 3px #0003;
  color: #fff;
}

.actions {
  flex: none;
  width: 96px;
  padding: 2px 7px 0 8px;
  border-right: 1px solid #e2e8f0;
  background: #fafcfe;
  color: #374151;
}
.actions section {
  display: flex;
  flex-direction: column;
  gap: 4px;
}
.actions section + section {
  margin-top: 9px;
}
.actions section + section::before {
  content: "";
  width: 32px;
  height: 1px;
  margin: 0 auto -4px;
  background: #dfe4ea;
}
.actions h3 {
  padding-top: 6px;
  font-size: 8px;
  line-height: 12px;
  font-weight: 700;
  letter-spacing: 1px;
  text-align: center;
  color: #94a3b8;
}
.actions button {
  display: flex;
  flex-direction: column;
  align-items: center;
  gap: 2px;
  padding: 4px;
  border: 0;
  border-radius: 6px;
  background: none;
}
.actions span {
  font-size: 10px;
  line-height: 12px;
  text-align: center;
  white-space: pre-line;
}
.actions .primary {
  background: #1f1fee;
  color: #fff;
}
.actions button:disabled {
  color: #b3b7bd;
}

.panel {
  display: flex;
  flex: none;
  flex-direction: column;
  width: 455px;
  overflow: hidden;
}
.panel-head {
  display: flex;
  flex: none;
  align-items: center;
  gap: 8px;
  height: 44px;
  padding: 0 10px 2px 12px;
  border-bottom: 1px solid #e8ebef;
  color: #64748b;
}
.panel-head h2 {
  flex: 1;
  font-size: 14px;
  font-weight: 600;
  color: #334155;
}
.panel-head .plain {
  color: #8a93a1;
}
.panel-top {
  padding: 16px 8px 8px 16px;
  border-bottom: 1px solid #e2e8f0;
}
.panel-body {
  display: flex;
  flex-direction: column;
  gap: 8px;
  padding: 16px 8px 0 16px;
}
.disclosure {
  display: flex;
  align-items: center;
  width: 100%;
  height: 34px;
  padding: 0 8px;
  border: 1px solid #e2e5e9;
  border-radius: 4px;
  background: #fff;
  color: #000;
}
.disclosure b {
  margin: 0 8px;
  font-weight: 500;
}
.disclosure span {
  padding: 2px 6px;
  border-radius: 4px;
  background: #f3f4f6;
}
.disclosure .soft {
  color: #374151;
}
.disclosure.round {
  border-radius: 8px;
}
.btn {
  display: inline-flex;
  align-items: center;
  gap: 4px;
  height: 26px;
  padding: 0 8px;
  border: 1px solid #e2e5ea;
  border-radius: 4px;
  background: #fff;
  color: #111;
}
.btn.faint {
  background: none;
}
.btn.arrow {
  justify-content: center;
  width: 27px;
  padding: 0;
}
.pair {
  display: flex;
  align-items: center;
  gap: 5px;
}
select {
  width: 121px;
  height: 29px;
  padding: 0 4px;
  border: 1px solid #c5cad1;
  border-radius: 4px;
  background: #fff;
  color: #1f2937;
}
.phase-box {
  padding: 8px;
  border: 1px solid #e2e6ea;
  border-radius: 4px;
  background: #f8fafb;
}
.phase-row {
  display: flex;
  flex-wrap: wrap;
  align-items: center;
  gap: 8px;
}
.phase-box p {
  margin-top: 4px;
  color: #64748b;
}
.chips {
  display: flex;
  flex-wrap: wrap;
  gap: 4px;
  color: #9ca3af;
  line-height: 22px;
}
.chips span {
  margin-right: 4px;
}
.chips button {
  height: 22px;
  padding: 0 8px;
  border: 1px solid #e0e3e7;
  border-radius: 4px;
  background: #fff;
  line-height: 20px;
  color: #6b7280;
}
.chips .on {
  border-color: #9ca3af;
  background: #e5e7eb;
  font-weight: 500;
  color: #1f2937;
}
.assign {
  display: flex;
  align-items: center;
  gap: 8px;
  height: 42px;
  padding: 0 12px;
  border: 1px solid #ddd6fe;
  border-radius: 8px;
  background: #f5f3ff;
  color: #5b21b6;
}
.assign > svg {
  color: #7c3aed;
}
.assign button {
  display: flex;
  align-items: center;
  gap: 6px;
  height: 24px;
  margin-left: auto;
  padding: 0 10px;
  border: 0;
  border-radius: 5px;
  background: #7c3aed;
  font-weight: 500;
  color: #fff;
}
.list-title {
  margin-top: 24px;
  font-size: 14px;
  line-height: 20px;
  font-weight: 600;
  color: #1f2937;
}
.list-title.traces {
  margin-top: 8px;
}
.traces-note {
  color: #475569;
}
.route {
  display: flex;
  flex-direction: column;
  align-items: flex-start;
  padding: 12px;
  border: 1px solid #3b7cd8;
  border-radius: 8px;
  background: #f2f4f9;
  color: #4b5563;
}
.route-head {
  display: flex;
  align-items: center;
  align-self: stretch;
  height: 24px;
}
.route-head strong {
  margin-right: 12px;
  font-size: 14px;
  font-weight: 500;
  color: #000;
}
.badge {
  margin-left: 12px;
  padding: 1px 8px;
  border: 1px solid #cdd2d9;
  border-radius: 11px;
  font-size: 10px;
  line-height: 18px;
  font-weight: 600;
  color: #374151;
}
.archive {
  gap: 4px;
  margin: 0 12px 0 auto;
}
.tool {
  width: 24px;
  height: 24px;
  margin-left: 4px;
  align-items: center;
  justify-content: center;
}
.archive + .tool {
  margin-left: 0;
}
.pale, .bell {
  color: #9ca3af;
}
.violet {
  color: #4f46e5;
}
.route-sub {
  display: flex;
  justify-content: space-between;
  align-self: stretch;
  height: 32px;
  margin: 4px 0 6px;
}
.bell {
  align-items: center;
  padding: 0 4px;
}
.manage {
  color: #374151;
}
.history {
  margin-top: 4px;
}
.decision {
  margin-top: 6px;
  font-weight: 500;
  color: #1d4ed8;
}
.stats {
  display: flex;
  gap: 12px;
  margin-top: 6px;
}
.stats span, .linked span {
  display: flex;
  align-items: center;
  gap: 4px;
}
.style-row {
  display: flex;
  align-items: center;
  height: 24px;
  margin-top: 12px;
}
.style-row input[type="color"] {
  width: 31px;
  height: 24px;
  margin: 0 9px 0 8px;
  padding: 1px 0;
  border: 1px solid #e2e5ea;
  border-radius: 4px;
  background: #eef0f3;
}
.style-row input[type="text"] {
  width: 48px;
  height: 22px;
  margin-left: 4px;
  padding: 0 4px;
  border: 1px solid #e2e5ea;
  border-radius: 4px;
  background: #fff;
}
.apply {
  margin-top: 8px;
  color: #a5a9b1;
  background: #f8f9fb;
}
.linked {
  display: flex;
  align-items: center;
  gap: 12px;
  height: 22px;
  margin-top: 12px;
}
.linked i {
  width: 32px;
  height: 4px;
  border-radius: 2px;
  background: #0b7bef;
}
.linked span {
  height: 22px;
  padding: 0 6px;
  border: 1px solid #f7cf57;
  border-radius: 4px;
  background: #fffbeb;
  color: #b45309;
}
.distance, .total {
  display: flex;
  align-items: center;
  gap: 4px;
  height: 20px;
  margin-top: 5px;
  font-size: 11px;
  color: #6b7280;
}
.total {
  height: 24px;
  margin-top: 3px;
}
.distance em {
  padding: 0 4px;
  border: 1px solid #a7f3d0;
  border-radius: 4px;
  background: #ecfdf5;
  font-size: 9px;
  line-height: 17px;
  font-style: normal;
  font-weight: 600;
  color: #047857;
}
.total em {
  padding: 0 6px;
  border: 1px solid #bfdbfe;
  border-radius: 4px;
  background: #eff6ff;
  line-height: 21px;
  font-style: normal;
  font-weight: 500;
  color: #1e40af;
}

.splitter {
  display: flex;
  flex: none;
  align-items: center;
  justify-content: center;
  width: 9px;
  background: #e2e8f0;
}
.splitter i {
  width: 2px;
  height: 22px;
  margin-top: 16px;
  background: repeating-linear-gradient(#8f9bab 0 2px, transparent 2px 4px);
}

.map {
  position: relative;
  flex: 1;
  min-width: 0;
  overflow: hidden;
}
.canvas {
  display: block;
  width: 100%;
  height: 100%;
}
.street text, .river {
  font-family: Roboto, sans-serif;
  font-size: 13px;
  font-weight: 500;
  text-anchor: middle;
  fill: #3f4d5f;
  stroke: #f8f8f8;
  stroke-width: 3px;
  paint-order: stroke;
  stroke-linejoin: round;
}
.street.quiet text {
  font-size: 12px;
  font-weight: 400;
  fill: #5f6873;
}
.street.border-label text {
  font-size: 14px;
  fill: #444;
}
.river {
  font-size: 16px;
  font-weight: 400;
  fill: #2a8a9c;
  stroke: none;
}
.watermark {
  font-family: Roboto, sans-serif;
  font-size: 22px;
  font-weight: 500;
  fill: #555;
}
.shield path {
  fill: #fff;
  stroke: #4b4f55;
  stroke-width: 1px;
}
.shield text {
  font-family: Roboto, sans-serif;
  font-size: 9px;
  font-weight: 500;
  text-anchor: middle;
  fill: #333;
}
.search {
  position: absolute;
  top: 16px;
  left: 121px;
  right: 195px;
  display: flex;
  align-items: center;
  height: 54px;
  padding: 0 16px;
  border: 1px solid #e6e8eb;
  border-radius: 8px;
  background: #fff;
  box-shadow: 0 3px 8px #0003;
  color: #8b9099;
}
.search input {
  flex: 1;
  min-width: 0;
  height: 40px;
  padding: 0 12px;
  border: 0;
  outline: 0;
  background: none;
  font-size: 14px;
  color: #1f2937;
}
.search input::placeholder {
  color: #c9cdd2;
}
.search button {
  color: #12386e;
}
.toolbars {
  position: absolute;
  top: 17px;
  right: 17px;
  display: flex;
  flex-direction: column;
  gap: 10px;
}
.toolbar {
  display: flex;
  flex-direction: column;
  gap: 4px;
  padding: 4px;
  border-radius: 10px;
  background: #fff;
  box-shadow: 0 1px 4px #0002;
}
.toolbar button {
  display: grid;
  place-items: center;
  width: 40px;
  height: 40px;
  padding: 0;
  border: 1px solid #dfe5ed;
  border-radius: 8px;
  background: #fff;
  color: #374151;
}
.toolbar .off {
  color: #c3c6ca;
  border-color: #eff2f6;
}
.toolbar .on {
  border-color: #9333ea;
  background: #9333ea;
  color: #fff;
}

.toast {
  position: absolute;
  top: 16px;
  right: 16px;
  display: flex;
  align-items: center;
  gap: 12px;
  width: 384px;
  padding: 16px;
  border: 1px solid #86dfa8;
  border-radius: 8px;
  background: #fff;
  box-shadow: 0 8px 14px #0000001c;
  color: #16a34a;
}
.toast p {
  flex: 1;
  font-size: 14px;
  line-height: 20px;
  font-weight: 500;
  color: #1f2937;
}
.toast button {
  padding: 4px;
  color: #1f2937;
}
</style>
